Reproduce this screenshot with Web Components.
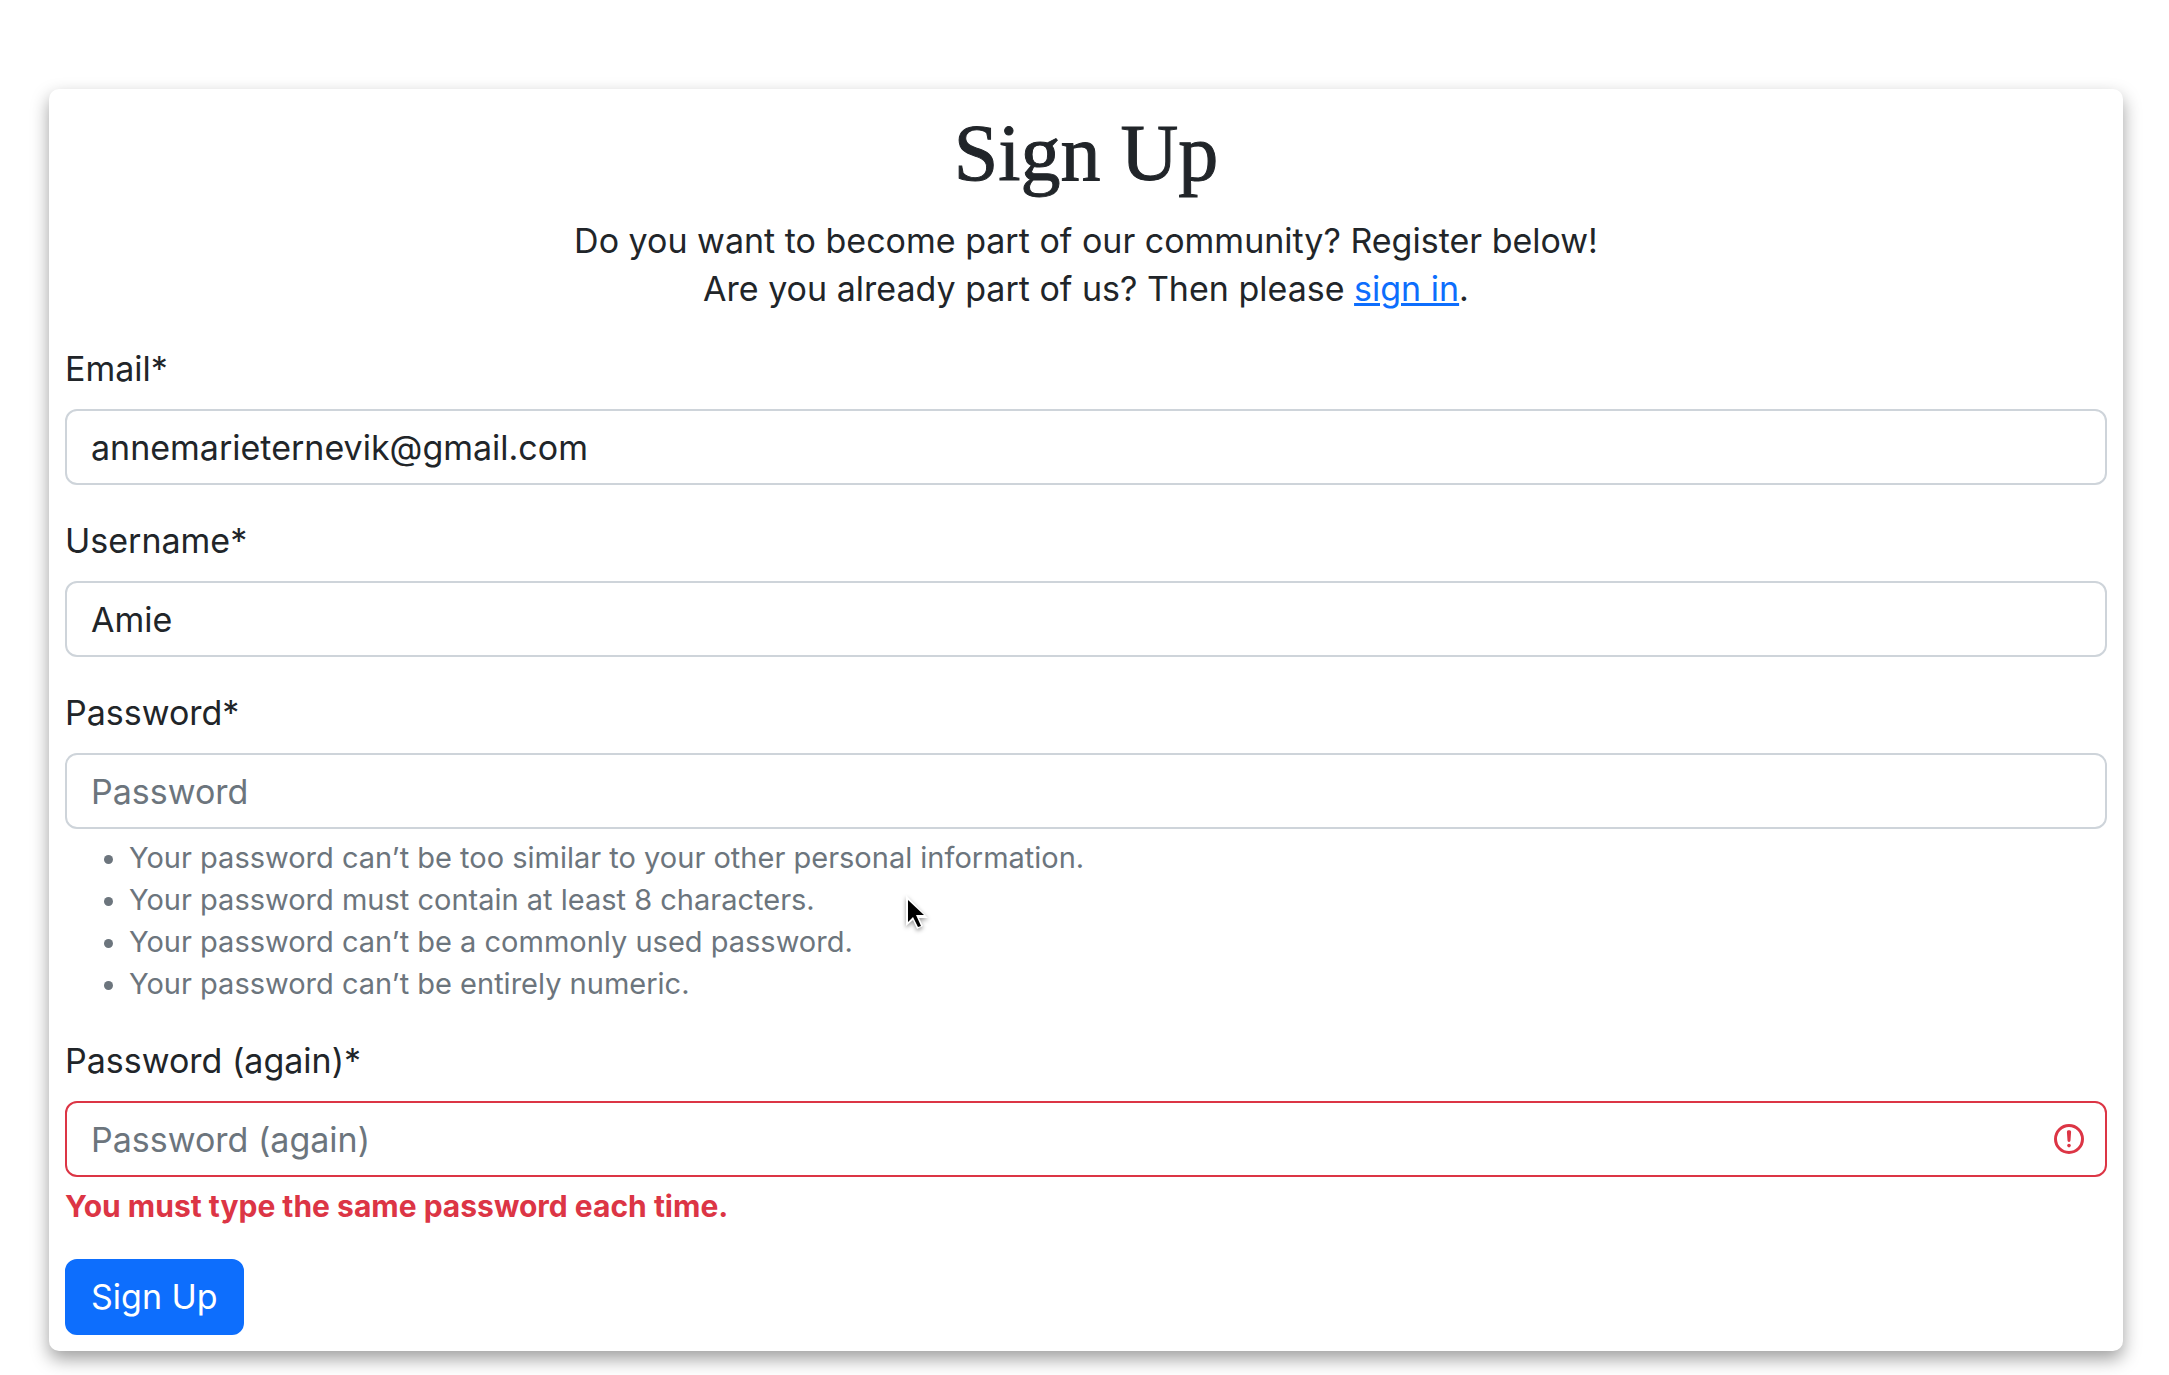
<!DOCTYPE html>
<html lang="en">
<head>
<meta charset="utf-8">
<meta name="viewport" content="width=device-width, initial-scale=1">
<title>Sign Up</title>
<style>
  body {
    margin: 0;
    background: #fff;
    color: #212529;
    font-family: Inter, "Open Sans", sans-serif;
    font-size: 34px;
    line-height: 48px;
  }
</style>
</head>
<body>
<sign-up-page></sign-up-page>

<script>
  /* White rounded panel with a drop shadow. */
  class PanelCard extends HTMLElement {
    constructor() {
      super();
      this.attachShadow({ mode: "open" }).innerHTML = `
        <style>
          :host {
            display: block;
            padding: 16px;
            background: #fff;
            border-radius: 10px;
            box-shadow: 0 8px 18px rgba(0, 0, 0, .38);
          }
        </style>
        <slot></slot>`;
    }
  }
  customElements.define("panel-card", PanelCard);

  /* Label, text box, and an optional hint or error passed in as content. */
  class FormField extends HTMLElement {
    constructor() {
      super();
      this.attachShadow({ mode: "open" }).innerHTML = `
        <style>
          :host { display: block; }
          label { display: block; margin-bottom: 16px; }
          .control { display: grid; align-items: center; }
          input, svg { grid-area: 1 / 1; }
          input {
            box-sizing: border-box;
            width: 100%;
            height: 76px;
            margin: 0;
            padding: 12px 24px;
            border: 2px solid #ced4da;
            border-radius: 12px;
            background: #fff;
            color: inherit;
            font: inherit;
            outline: none;
          }
          input::placeholder { color: #6c757d; opacity: 1; }
          svg { display: none; justify-self: end; width: 36px; height: 36px; margin-right: 20px; }
          :host([invalid]) input { border-color: #dc3545; padding-right: 72px; }
          :host([invalid]) svg { display: block; }
          ::slotted(*) { margin-top: 8px; }
        </style>
        <label for="control"></label>
        <div class="control">
          <input id="control">
          <svg viewBox="0 0 12 12" fill="none" stroke="#dc3545" aria-hidden="true">
            <circle cx="6" cy="6" r="4.5"/>
            <path stroke-linejoin="round" d="M5.8 3.6h.4L6 6.5z"/>
            <circle cx="6" cy="8.2" r=".6" fill="#dc3545" stroke="none"/>
          </svg>
        </div>
        <slot></slot>`;
    }
    connectedCallback() {
      const input = this.shadowRoot.querySelector("input");
      this.shadowRoot.querySelector("label").textContent = this.getAttribute("label");
      input.type = this.getAttribute("type") || "text";
      input.placeholder = this.getAttribute("placeholder") || "";
      input.value = this.getAttribute("value") || "";
      input.spellcheck = false;
      if (this.hasAttribute("invalid")) input.setAttribute("aria-invalid", "true");
    }
  }
  customElements.define("form-field", FormField);

  /* Bulleted rules below a field. */
  class HintList extends HTMLElement {
    constructor() {
      super();
      this.attachShadow({ mode: "open" }).innerHTML = `
        <style>
          :host { display: block; color: #6c757d; font-size: 29px; line-height: 42px; }
          ul { margin: 0; padding-left: 64px; }
        </style>
        <ul>
          <li>Your password can’t be too similar to your other personal information.</li>
          <li>Your password must contain at least 8 characters.</li>
          <li>Your password can’t be a commonly used password.</li>
          <li>Your password can’t be entirely numeric.</li>
        </ul>`;
    }
  }
  customElements.define("hint-list", HintList);

  class ErrorText extends HTMLElement {
    constructor() {
      super();
      this.attachShadow({ mode: "open" }).innerHTML = `
        <style>
          :host { display: block; color: #dc3545; font-size: 30px; line-height: 42px; font-weight: 700; }
        </style>
        <slot></slot>`;
    }
  }
  customElements.define("error-text", ErrorText);

  class PrimaryButton extends HTMLElement {
    constructor() {
      super();
      this.attachShadow({ mode: "open" }).innerHTML = `
        <style>
          :host { display: flex; }
          button {
            margin: 0;
            padding: 12px 24px;
            border: 2px solid #0d6efd;
            border-radius: 12px;
            background: #0d6efd;
            color: #fff;
            font: inherit;
          }
        </style>
        <button type="button"><slot></slot></button>`;
    }
  }
  customElements.define("primary-button", PrimaryButton);

  /* Arrow pointer that floats over the page. */
  class MousePointer extends HTMLElement {
    constructor() {
      super();
      this.attachShadow({ mode: "open" }).innerHTML = `
        <style>
          :host { display: block; position: absolute; left: 902px; top: 893px; pointer-events: none; }
          svg { display: block; filter: drop-shadow(0 2px 2px rgba(0, 0, 0, .4)); }
        </style>
        <svg width="30" height="42" viewBox="0 0 30 42" aria-hidden="true">
          <path d="M4 2v31l7-6 4 9 6-3-4-8h9z" fill="#fff"/>
          <path d="M6 7v22l5-5 5 10 3-1-5-11h8z" fill="#000"/>
        </svg>`;
    }
  }
  customElements.define("mouse-pointer", MousePointer);

  class SignUpPage extends HTMLElement {
    constructor() {
      super();
      this.attachShadow({ mode: "open" }).innerHTML = `
        <style>
          :host { display: block; padding: 89px 46px 24px 49px; }
          header { text-align: center; margin-bottom: 32px; }
          h1 {
            margin: 0 0 16px;
            font: 400 80px/96px "Liberation Serif", serif;
            -webkit-text-stroke: 1px currentColor;
          }
          p { margin: 0; }
          a { color: #0d6efd; text-decoration-thickness: 3px; }
          form { display: flex; flex-direction: column; gap: 32px; }
        </style>
        <panel-card>
          <header>
            <h1>Sign Up</h1>
            <p>Do you want to become part of our community? Register below!<br>
            Are you already part of us? Then please <a href="#">sign in</a>.</p>
          </header>
          <form>
            <form-field label="Email*" type="email" value="annemarieternevik@gmail.com"></form-field>
            <form-field label="Username*" value="Amie"></form-field>
            <form-field label="Password*" type="password" placeholder="Password"><hint-list></hint-list></form-field>
            <form-field label="Password (again)*" type="password" placeholder="Password (again)" invalid><error-text>You must type the same password each time.</error-text></form-field>
            <primary-button>Sign Up</primary-button>
          </form>
        </panel-card>
        <mouse-pointer></mouse-pointer>`;
    }
  }
  customElements.define("sign-up-page", SignUpPage);
</script>
</body>
</html>
